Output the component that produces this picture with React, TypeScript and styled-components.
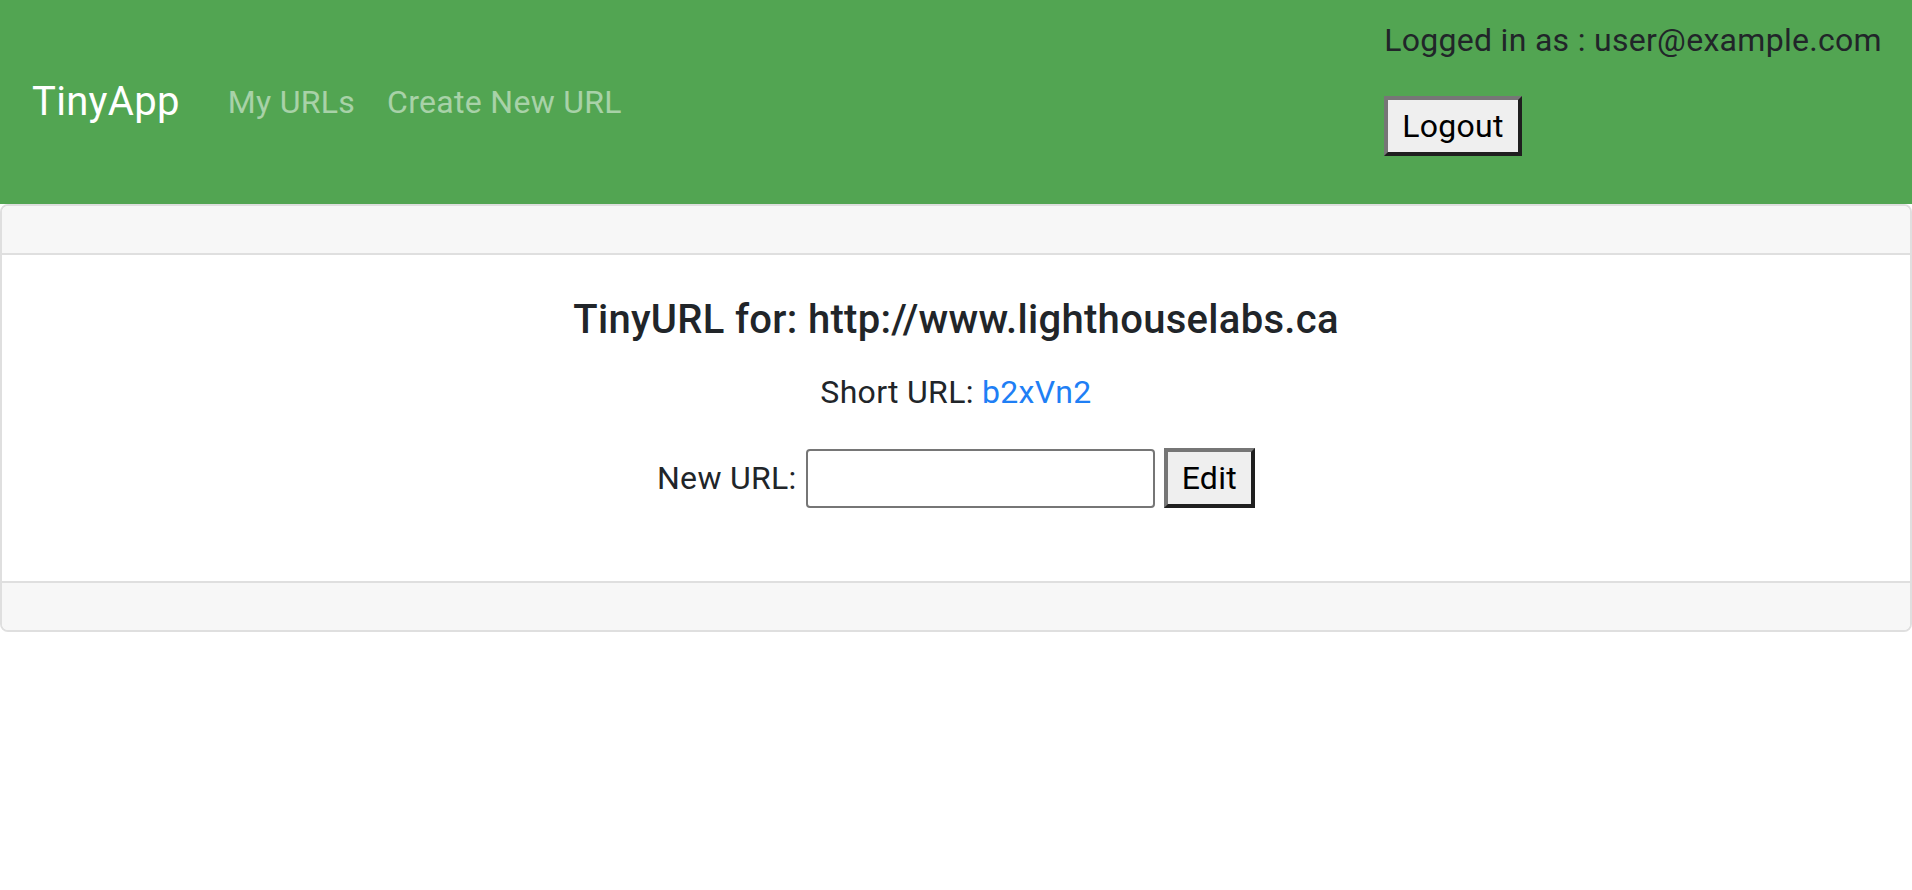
import React from "react";
import styled, { createGlobalStyle } from "styled-components";

const GlobalStyle = createGlobalStyle`
  html, body {
    margin: 0;
    padding: 0;
    background: #ffffff;
  }
  body {
    font-family: Roboto, "Liberation Sans", Arial, sans-serif;
    font-size: 32px;
    line-height: 1.5;
    letter-spacing: 0.3px;
    color: #212529;
  }
  * { box-sizing: border-box; }
`;

const Navbar = styled.nav`
  display: flex;
  align-items: center;
  justify-content: space-between;
  padding: 16px 30px 16px 32px;
  background: #52a552;
`;

const NavLeft = styled.div`
  display: flex;
  align-items: center;
`;

const Brand = styled.a`
  font-size: 40px;
  line-height: 1.5;
  padding: 10px 0;
  margin-right: 32px;
  color: #ffffff;
  text-decoration: none;
`;

const NavList = styled.div`
  display: flex;
  align-items: center;
`;

const NavLink = styled.a`
  padding: 16px;
  font-size: 32px;
  color: rgba(255, 255, 255, 0.5);
  text-decoration: none;
`;

const UserBox = styled.div`
  display: flex;
  flex-direction: column;
  align-items: flex-start;
`;

const UserText = styled.p`
  margin: 0 0 32px;
  color: #212529;
`;

const LogoutForm = styled.form`
  margin: 0 0 32px;
`;

const LegacyButton = styled.button`
  font-family: inherit;
  font-size: 32px;
  letter-spacing: 0.3px;
  line-height: 48px;
  padding: 2px 14px;
  color: #000000;
  background: #efefef;
  border-width: 4px;
  border-style: solid;
  border-color: #767676 #1f1f1f #1f1f1f #767676;
  border-radius: 0;
  cursor: pointer;
`;

const Card = styled.section`
  border: 2px solid #dfdfdf;
  border-radius: 8px;
  background: #ffffff;
  overflow: hidden;
`;

const CardBand = styled.div<{ $position: "top" | "bottom" }>`
  height: 49px;
  background: #f7f7f7;
  ${(p) =>
    p.$position === "top"
      ? "border-bottom: 2px solid #dfdfdf;"
      : "border-top: 2px solid #dfdfdf;"}
`;

const CardBody = styled.div`
  padding: 41px 40px 41px;
  text-align: center;
`;

const CardTitle = styled.h5`
  margin: 0 0 24px;
  font-size: 40px;
  font-weight: 500;
  line-height: 1.2;
  color: #212529;
`;

const CardText = styled.p`
  margin: 0 0 32px;
`;

const ShortLink = styled.a`
  color: #1f7ff5;
  text-decoration: none;
`;

const EditForm = styled.form`
  display: flex;
  justify-content: center;
  align-items: center;
  gap: 9px;
  margin: 0 0 32px;
`;

const Label = styled.label`
  color: #212529;
`;

const UrlInput = styled.input`
  width: 349px;
  height: 59px;
  padding: 2px 6px;
  font-family: inherit;
  font-size: 26px;
  border: 2px solid #767676;
  border-radius: 4px;
  background: #ffffff;
  outline: none;
`;

export default function App() {
  return (
    <>
      <GlobalStyle />
      <Navbar>
        <NavLeft>
          <Brand href="#">TinyApp</Brand>
          <NavList>
            <NavLink href="#">My URLs</NavLink>
            <NavLink href="#">Create New URL</NavLink>
          </NavList>
        </NavLeft>
        <UserBox>
          <UserText>Logged in as : user@example.com</UserText>
          <LogoutForm onSubmit={(e) => e.preventDefault()}>
            <LegacyButton type="submit">Logout</LegacyButton>
          </LogoutForm>
        </UserBox>
      </Navbar>
      <Card>
        <CardBand $position="top" />
        <CardBody>
          <CardTitle>TinyURL for: http://www.lighthouselabs.ca</CardTitle>
          <CardText>
            Short URL: <ShortLink href="#">b2xVn2</ShortLink>
          </CardText>
          <EditForm onSubmit={(e) => e.preventDefault()}>
            <Label htmlFor="newURL">New URL:</Label>
            <UrlInput id="newURL" type="text" name="newURL" />
            <LegacyButton type="submit">Edit</LegacyButton>
          </EditForm>
        </CardBody>
        <CardBand $position="bottom" />
      </Card>
    </>
  );
}
